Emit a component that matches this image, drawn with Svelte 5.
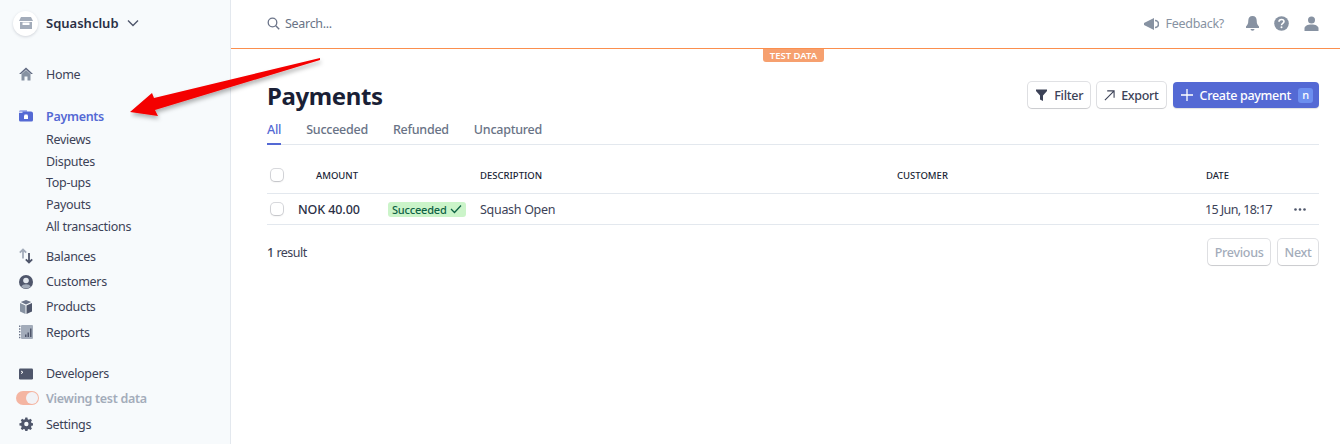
<script lang="ts">
  const subItems = ['Reviews', 'Disputes', 'Top-ups', 'Payouts', 'All transactions'];
  const tabs = ['All', 'Succeeded', 'Refunded', 'Uncaptured'];
</script>

<div class="dashboard">
  <aside class="sidebar">
    <div class="account">
      <span class="account-logo">
        <svg width="14" height="14" viewBox="0 0 14 14"><path fill="#a3acba" d="M2 1h10l2 4H0zM1 6h12v7H1z"/><path fill="#fff" d="M3.5 6.5h7V9h-7z"/></svg>
      </span>
      <span class="account-name">Squashclub</span>
      <svg width="12" height="8" viewBox="0 0 12 8"><path d="M1 1.5l5 5 5-5" fill="none" stroke="#4f566b" stroke-width="1.4"/></svg>
    </div>

    <nav class="nav">
      <a class="item home">
        <svg class="icon" viewBox="0 0 14 14"><path fill="#5f6880" d="M7 .5L0 7h2L7 2.500 12 7h2z"/><path fill="#8792a2" d="M2.500 7L7 3l4.500 4v6.500H8.500V9.500h-3v4h-3z"/></svg>
        Home
      </a>

      <a class="item payments">
        <svg class="icon" viewBox="0 0 14 14"><path fill="#a9b4ea" d="M0 2.500A1.500 1.500 0 0 1 1.500 1H8v2.500H0z"/><path fill="#5469d4" d="M0 4h3.500V2.500H12A2 2 0 0 1 14 4.500V11a1.500 1.500 0 0 1-1.500 1.500h-11A1.500 1.500 0 0 1 0 11z"/><path fill="#fff" d="M5.500 5.500h3v1h.5v3.500H5V6.500h.5z"/></svg>
        Payments
      </a>
      <div class="sub">
        {#each subItems as s}
          <a class="sub-item">{s}</a>
        {/each}
      </div>

      <div class="group">
        <a class="item">
          <svg class="icon tall" viewBox="0 0 14 16"><path d="M4 10.500V1.500M.8 4.700L4 1.500l3.200 3.200" fill="none" stroke="#a3acba" stroke-width="1.800"/><path d="M10 5v9.500M6.800 11.300l3.200 3.200 3.200-3.200" fill="none" stroke="#4f566b" stroke-width="1.800"/></svg>
          Balances
        </a>
        <a class="item">
          <svg class="icon" viewBox="0 0 14 14"><circle cx="7" cy="7" r="7" fill="#4f566b"/><circle cx="7" cy="5.500" r="2.800" fill="#e3e8ee"/><path d="M2.200 11.500a5.200 3.500 0 0 1 9.600 0 6.800 6.800 0 0 1-9.600 0z" fill="#a3acba"/></svg>
          Customers
        </a>
        <a class="item">
          <svg class="icon" viewBox="0 0 14 14"><path fill="#8792a2" d="M1 3l5.500 2.500V14L1 11.500z"/><path fill="#4f566b" d="M7.500 5.500L13 3v8.500L7.500 14z"/><path fill="#6b7489" d="M1.800 2L7 0l5.200 2L7 4.500z"/></svg>
          Products
        </a>
        <a class="item">
          <svg class="icon" viewBox="0 0 14 14"><rect x="2" y="0" width="12" height="14" rx="1" fill="#a3acba"/><path fill="#4f566b" d="M6 9.500h1.500V12H6zM8.500 7.500H10V12H8.500zM11 3.500h1.500V12H11z"/><path d="M.7 .5v13" stroke="#6b7489" stroke-width="1.400" stroke-dasharray="1.500 1.300"/></svg>
          Reports
        </a>
      </div>

      <div class="group bottom">
        <a class="item">
          <svg class="icon" viewBox="0 0 14 14"><rect y="1.500" width="14" height="11" rx="1.200" fill="#4f566b"/><path d="M2 4l2 1.300L2 6.600" fill="none" stroke="#fff" stroke-width="1"/></svg>
          Developers
        </a>
        <a class="item viewing">
          <span class="toggle"><span class="knob"></span></span>
          Viewing test data
        </a>
        <a class="item">
          <svg class="icon" viewBox="0 0 16 16"><path fill="#4f566b" fill-rule="evenodd" d="M6.800 1h2.400l.4 2 1.300.6 1.800-1.100 1.700 1.700-1.100 1.800.6 1.300 2 .4v2.400l-2 .4-.6 1.300 1.100 1.800-1.700 1.700-1.800-1.100-1.300.6-.4 2H6.800l-.4-2-1.300-.6-1.800 1.100-1.700-1.700 1.100-1.800-.6-1.300-2-.4V7.700l2-.4.600-1.300-1.100-1.800 1.700-1.700 1.800 1.100 1.300-.6zM8 6a2.500 2.500 0 1 0 0 5 2.500 2.500 0 0 0 0-5z" transform="translate(.4 -.5)"/></svg>
          Settings
        </a>
      </div>
    </nav>
  </aside>

  <div class="main">
    <header class="topbar">
      <div class="search">
        <svg width="13" height="13" viewBox="0 0 13 13"><circle cx="5.500" cy="5.500" r="4.300" fill="none" stroke="#6b7489" stroke-width="1.300"/><path d="M8.800 8.800l3.400 3.400" stroke="#6b7489" stroke-width="1.400"/></svg>
        <span>Search...</span>
      </div>
      <div class="top-actions">
        <span class="feedback">
          <svg width="15" height="12" viewBox="0 0 15 12"><path fill="#8792a2" d="M0 5l10-5v12L0 7z"/><path d="M11 2.500a3.500 3.500 0 0 1 0 7" fill="none" stroke="#8792a2" stroke-width="1.700"/></svg>
          Feedback?
        </span>
        <svg class="bell" width="13" height="15" viewBox="0 0 13 15"><path fill="#8792a2" d="M6.500 0c2.800 0 4.200 2 4.200 4.500 0 3 .7 4.500 2.300 6V12H0v-1.500c1.600-1.500 2.300-3 2.300-6C2.300 2 3.700 0 6.500 0z"/><path fill="#8792a2" d="M4.500 13h4a2 1.800 0 0 1-4 0z"/></svg>
        <svg class="help" width="15" height="15" viewBox="0 0 15 15"><circle cx="7.500" cy="7.500" r="7.300" fill="#8792a2"/><path d="M5 5.800c0-1.500 1.100-2.300 2.500-2.300s2.500.8 2.500 2.100c0 1.900-2.500 1.800-2.500 3.600" fill="none" stroke="#fff" stroke-width="1.600"/><circle cx="7.500" cy="11.300" r="1" fill="#fff"/></svg>
        <svg class="user" width="15" height="15" viewBox="0 0 15 15"><circle cx="7.500" cy="4" r="3.500" fill="#8792a2"/><path fill="#8792a2" d="M.5 15v-2.500C.5 10 3.500 8.500 7.500 8.500s7 1.500 7 4V15z"/></svg>
      </div>
    </header>
    <div class="test-line"><span class="test-badge">TEST DATA</span></div>

    <main class="content">
      <div class="title-row">
        <h1>Payments</h1>
        <div class="actions">
          <button class="btn filter">
            <svg width="11" height="12" viewBox="0 0 11 12"><path fill="#3c4257" d="M0 .5h11v1.500L7 6.500V12L4 10.500v-4L0 2z"/></svg>
            Filter
          </button>
          <button class="btn">
            <svg width="11" height="11" viewBox="0 0 12 12"><path d="M1 11L10.500 1.500M3.500 1h7.500v7.500" fill="none" stroke="#3c4257" stroke-width="1.200"/></svg>
            Export
          </button>
          <button class="btn primary">
            <svg width="12" height="12" viewBox="0 0 12 12"><path d="M6 0v12M0 6h12" stroke="#fff" stroke-width="1.300"/></svg>
            Create payment
            <span class="key">n</span>
          </button>
        </div>
      </div>

      <div class="tabs">
        {#each tabs as tab, i}
          <a class="tab" class:active={i === 0}>{tab}</a>
        {/each}
      </div>

      <div class="table">
        <div class="row head">
          <span class="check"></span>
          <span class="c-amount">AMOUNT</span>
          <span class="c-status"></span>
          <span class="c-desc">DESCRIPTION</span>
          <span class="c-cust">CUSTOMER</span>
          <span class="c-date">DATE</span>
        </div>
        <div class="row body">
          <span class="check"></span>
          <span class="c-amount strong">NOK 40.00</span>
          <span class="c-status">
            <span class="pill">Succeeded
              <svg width="12" height="10" viewBox="0 0 12 10"><path d="M1 5l3.500 3.500L11 1.500" fill="none" stroke="#0e6245" stroke-width="1.300"/></svg>
            </span>
          </span>
          <span class="c-desc">Squash Open</span>
          <span class="c-cust"></span>
          <span class="c-date">15 Jun, 18:17</span>
          <svg class="more" width="12" height="3" viewBox="0 0 12 3"><circle cx="1.500" cy="1.500" r="1.300" fill="#4f566b"/><circle cx="6" cy="1.500" r="1.300" fill="#4f566b"/><circle cx="10.500" cy="1.500" r="1.300" fill="#4f566b"/></svg>
        </div>
      </div>

      <div class="footer">
        <span class="count"><b>1</b> result</span>
        <div class="pager">
          <button class="btn off">Previous</button>
          <button class="btn off">Next</button>
        </div>
      </div>
    </main>
  </div>

  <!-- annotation drawn on top of the screenshot -->
  <svg class="arrow" width="210" height="70" viewBox="0 0 210 70">
    <defs>
      <filter id="arrow-shadow" x="-10%" y="-30%" width="120%" height="170%">
        <feDropShadow dx="1" dy="3" stdDeviation="2" flood-color="#000" flood-opacity=".3"/>
      </filter>
    </defs>
    <path fill="#f40000" filter="url(#arrow-shadow)" d="M190 1L24 41 22 36 0 55 28 59 25 53 190 3z"/>
  </svg>
</div>

<style>
  :global(body) {
    margin: 0;
    background: #fff;
    font-family: "Noto Sans", "Open Sans", sans-serif;
    color: #3c4257;
    font-size: 12.500px;
    letter-spacing: -0.3px;
  }
  .dashboard {
    position: relative;
    display: flex;
    width: 1340px;
    height: 444px;
    overflow: hidden;
  }
  a {
    color: inherit;
    text-decoration: none;
  }

  .sidebar {
    box-sizing: border-box;
    width: 231px;
    flex: none;
    background: #f7fafc;
    border-right: 1px solid #e3e8ee;
    padding: 11px 0 0 13px;
  }
  .account {
    display: flex;
    align-items: center;
    height: 24px;
    gap: 8px;
    font-weight: 600;
    font-size: 13px;
    color: #2a2f45;
    letter-spacing: 0;
  }
  .account-logo {
    display: flex;
    align-items: center;
    justify-content: center;
    width: 25px;
    height: 25px;
    border-radius: 50%;
    background: #fff;
    box-shadow: 0 1px 3px rgba(60, 66, 87, 0.2);
  }
  .nav {
    margin-top: 27px;
    padding-left: 6px;
  }
  .item {
    display: flex;
    align-items: center;
    gap: 13px;
    height: 25.400px;
    color: #3c4257;
  }
  .icon {
    width: 14px;
    height: 14px;
    flex: none;
  }
  .icon.tall {
    height: 16px;
  }
  .home {
    height: 24px;
  }
  .payments {
    margin-top: 18px;
    height: 24px;
    color: #5469d4;
    font-weight: 600;
  }
  .sub {
    display: flex;
    flex-direction: column;
    padding: 1px 0 0 27px;
  }
  .sub-item {
    height: 21.700px;
    line-height: 21.700px;
  }
  .group {
    margin-top: 6px;
  }
  .bottom {
    margin-top: 16px;
  }
  .viewing {
    color: #a3acba;
    font-weight: 600;
    margin: -1px 0 1px -3px;
    gap: 7px;
  }
  .toggle {
    display: flex;
    justify-content: flex-end;
    box-sizing: border-box;
    width: 23px;
    height: 14px;
    padding: 1px;
    border-radius: 7px;
    background: #f4b5a2;
  }
  .knob {
    width: 12px;
    height: 12px;
    border-radius: 50%;
    background: #f1f2f6;
  }

  .main {
    flex: 1;
    min-width: 0;
  }
  .topbar {
    display: flex;
    align-items: center;
    justify-content: space-between;
    box-sizing: border-box;
    height: 47px;
    margin-bottom: 1px;
    padding: 0 21px 0 36px;
  }
  .search {
    display: flex;
    align-items: center;
    gap: 5px;
    color: #697386;
  }
  .top-actions {
    display: flex;
    align-items: center;
  }
  .feedback {
    display: flex;
    align-items: center;
    gap: 7px;
    color: #8792a2;
    margin-right: 22px;
  }
  .help {
    margin: 0 15px 0 15px;
  }
  .test-line {
    display: flex;
    justify-content: center;
    border-top: 1px solid #fb8f4e;
    height: 0;
    padding-left: 16px;
  }
  .test-badge {
    height: 13px;
    line-height: 13px;
    padding: 0 7px;
    background: #f6a06f;
    color: #fff;
    font-size: 9.500px;
    font-weight: 600;
    letter-spacing: 0;
    border-radius: 0 0 3px 3px;
  }

  .content {
    padding: 28px 21px 0 36px;
  }
  .title-row {
    display: flex;
    align-items: center;
    justify-content: space-between;
    height: 36px;
  }
  h1 {
    margin: 0;
    font-size: 24px;
    font-weight: 700;
    letter-spacing: -0.400px;
    color: #1a1f36;
  }
  .actions {
    display: flex;
    gap: 7px;
  }
  .btn {
    display: inline-flex;
    align-items: center;
    box-sizing: border-box;
    height: 26px;
    gap: 6px;
    padding: 0 7px;
    border: 0;
    border-radius: 4px;
    background: #fff;
    color: #3c4257;
    font: 500 12.500px "Noto Sans", "Open Sans", sans-serif;
    letter-spacing: -0.300px;
    box-shadow: 0 0 0 1px rgba(60, 66, 87, 0.16), 0 1px 1px rgba(0, 0, 0, 0.1);
  }
  .filter {
    padding: 0 7px 0 8px;
    gap: 7px;
  }
  .primary {
    gap: 7px;
    padding: 0 6px 0 8px;
    background: #5469d4;
    color: #fff;
    box-shadow: 0 1px 1px rgba(0, 0, 0, 0.12);
  }
  .key {
    width: 15px;
    height: 15px;
    line-height: 14px;
    text-align: center;
    border-radius: 3px;
    background: #6c8eef;
    font-size: 11px;
  }
  .tabs {
    display: flex;
    gap: 25px;
    height: 27px;
    margin-top: 4px;
    border-bottom: 1px solid #e3e8ee;
    letter-spacing: -0.250px;
  }
  .tab {
    box-sizing: border-box;
    height: 28px;
    padding-top: 4px;
    color: #697386;
    font-weight: 500;
  }
  .tab.active {
    color: #5469d4;
    border-bottom: 2px solid #5469d4;
  }
  .row {
    display: grid;
    grid-template-columns: 31px 90px 92px 417px 309px 84px 1fr;
    align-items: center;
    border-bottom: 1px solid #e3e8ee;
  }
  .head {
    box-sizing: border-box;
    height: 49px;
    padding-top: 12px;
    font-size: 9.500px;
    font-weight: 500;
    letter-spacing: 0;
    color: #1a1f36;
  }
  .body {
    height: 30px;
  }
  .body .c-date {
    margin-left: -1px;
    letter-spacing: -0.600px;
  }
  .check {
    display: block;
    width: 12px;
    height: 12px;
    margin-left: 4px;
    border-radius: 4px;
    background: #fff;
    box-shadow: 0 0 0 1px rgba(60, 66, 87, 0.2), 0 1px 2px rgba(0, 0, 0, 0.12);
  }
  .head .c-amount {
    text-align: center;
    padding-right: 12px;
  }
  .strong {
    color: #2a2f45;
    font-weight: 500;
    letter-spacing: -0.100px;
  }
  .pill {
    display: inline-flex;
    align-items: center;
    gap: 3px;
    height: 15px;
    padding: 0 4px;
    border-radius: 3px;
    background: #cbf4c9;
    color: #0e6245;
    font-size: 11px;
    font-weight: 500;
    letter-spacing: -0.200px;
  }
  .more {
    margin-left: 4px;
  }
  .footer {
    display: flex;
    align-items: center;
    justify-content: space-between;
    margin-top: 14px;
  }
  .count {
    letter-spacing: -0.500px;
  }
  .count b {
    font-weight: 500;
  }
  .pager {
    display: flex;
    gap: 8px;
    margin-right: 1px;
  }
  .off {
    color: #a3acba;
    padding: 0 6.500px;
  }
  .arrow {
    position: absolute;
    left: 130px;
    top: 57px;
  }
</style>
